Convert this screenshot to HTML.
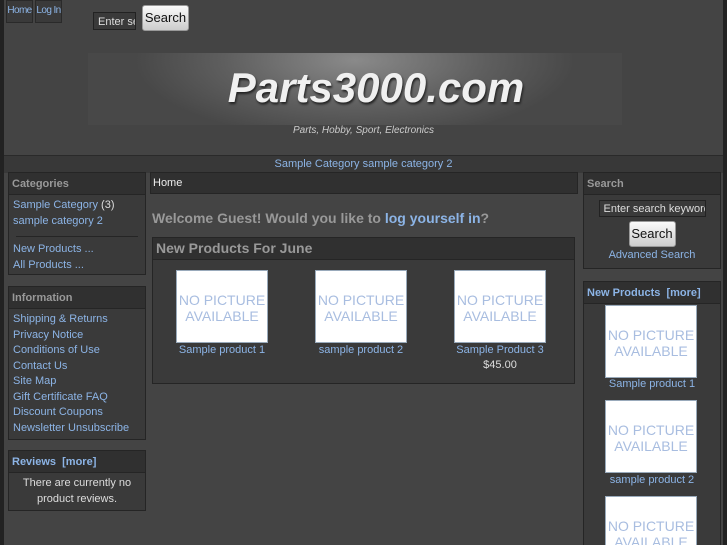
<!DOCTYPE html>
<html style="width:727px;height:545px;overflow:hidden"><head><style>
*{margin:0;padding:0;box-sizing:border-box}
body{width:727px;height:545px;overflow:hidden;background:#444;font-family:"Liberation Sans",sans-serif;font-size:11px;color:#ddd;position:relative}
.a{position:absolute}
a,.l{color:#8cb4e6;text-decoration:none}
.box{position:absolute;background:#3a3a3a;border:1px solid #252525}
.hd{height:22px;background:#303030;border-bottom:1px solid #252525;color:#999;font-weight:bold;padding:5px 3px;font-size:11px}
.np{position:absolute;width:92px;height:73px;background:#fff;border:1px solid #9ab;color:#a8bde0;font-size:14px;text-align:center;line-height:16px;padding-top:21px}
.nb{position:absolute;background:#3a3a3a;border:1px solid #2a2a2a;color:#8cb4e6;padding:4px 0 0;height:23px;white-space:nowrap;font-size:10px;letter-spacing:-0.6px;text-align:center;overflow:hidden}
.lk{line-height:15.5px;padding:3px 4px}
</style></head><body>
<div class="a" style="left:0;top:0;width:4px;height:545px;background:#222"></div>
<div class="a" style="left:723px;top:0;width:4px;height:545px;background:#222"></div>
<div class="nb" style="left:6px;top:0;width:27px">Home</div>
<div class="nb" style="left:35px;top:0;width:27px">Log In</div>
<div class="a" style="left:93px;top:12px;width:43px;height:18px;background:#3a3a3a;border:1px solid #222;color:#ddd;padding:3px 4px;overflow:hidden;white-space:nowrap">Enter search</div>
<div class="a" style="left:142px;top:5px;width:47px;height:26px;background:linear-gradient(#fafafa,#ccc);border:1px solid #999;border-radius:3px;color:#111;font-size:13px;text-align:center;line-height:24px">Search</div>
<div class="a" style="left:88px;top:53px;width:534px;height:72px;background:radial-gradient(ellipse 220px 80px at 50% 10%,#8a8a8a,#5e5e5e 60%,#484848 100%)"></div>
<div class="a" style="left:88px;top:64px;width:576px;text-align:center;font-size:42px;font-weight:bold;font-style:italic;color:#f0f0f0;text-shadow:1px 2px 2px #222;letter-spacing:0px">Parts3000.com</div>
<div class="a" style="left:0;top:125px;width:727px;text-align:center;font-size:10px;font-style:italic;color:#ccc">Parts, Hobby, Sport, Electronics</div>
<div class="a" style="left:4px;top:155px;width:719px;height:18px;background:#383838;border-top:1px solid #2a2a2a;text-align:center;color:#8cb4e6;line-height:16px">Sample Category sample category 2</div>

<div class="box" style="left:8px;top:172px;width:138px;height:103px"><div class="hd">Categories</div>
<div class="lk"><a>Sample Category</a> (3)<br><a>sample category 2</a></div>
<div style="margin:4px 7px;border-top:1px solid #252525"></div>
<div class="lk" style="padding-top:1px"><a>New Products ...</a><br><a>All Products ...</a></div></div>

<div class="box" style="left:8px;top:286px;width:138px;height:154px"><div class="hd">Information</div>
<div class="lk" style="padding-top:3px"><a>Shipping &amp; Returns</a><br><a>Privacy Notice</a><br><a>Conditions of Use</a><br><a>Contact Us</a><br><a>Site Map</a><br><a>Gift Certificate FAQ</a><br><a>Discount Coupons</a><br><a>Newsletter Unsubscribe</a></div></div>

<div class="box" style="left:8px;top:450px;width:138px;height:61px"><div class="hd" style="color:#8cb4e6">Reviews &nbsp;[more]</div>
<div style="text-align:center;line-height:15.5px;padding:3px 10px">There are currently no product reviews.</div></div>

<div class="box" style="left:150px;top:172px;width:428px;height:22px;background:#303030;color:#eee;padding:4px 2px">Home</div>
<div class="a" style="left:152px;top:210px;font-size:14px;font-weight:bold;color:#999">Welcome Guest! Would you like to <a>log yourself in</a>?</div>
<div class="box" style="left:152px;top:237px;width:423px;height:147px"><div class="hd" style="font-size:14px;padding:2px 3px">New Products For June</div></div>
<div class="np" style="left:176px;top:270px">NO PICTURE AVAILABLE</div>
<div class="np" style="left:315px;top:270px">NO PICTURE AVAILABLE</div>
<div class="np" style="left:454px;top:270px">NO PICTURE AVAILABLE</div>
<div class="a l" style="left:150px;top:344px;width:144px;text-align:center">Sample product 1</div>
<div class="a l" style="left:289px;top:344px;width:144px;text-align:center">sample product 2</div>
<div class="a l" style="left:428px;top:344px;width:144px;text-align:center">Sample Product 3</div>
<div class="a" style="left:428px;top:359px;width:144px;text-align:center">$45.00</div>

<div class="box" style="left:583px;top:172px;width:138px;height:97px"><div class="hd">Search</div>
<div style="margin:5px auto 0;width:107px;height:17px;background:#3a3a3a;border:1px solid #222;padding:2px 4px;white-space:nowrap;overflow:hidden">Enter search keywords</div>
<div style="margin:4px auto 0;width:47px;height:26px;background:linear-gradient(#fafafa,#ccc);border:1px solid #999;border-radius:3px;color:#111;font-size:13px;text-align:center;line-height:24px">Search</div>
<div style="text-align:center;margin-top:2px"><a>Advanced Search</a></div></div>

<div class="box" style="left:583px;top:281px;width:138px;height:264px;border-bottom:none"><div class="hd" style="color:#8cb4e6">New Products &nbsp;[more]</div></div>
<div class="np" style="left:605px;top:305px">NO PICTURE AVAILABLE</div>
<div class="a l" style="left:583px;top:378px;width:138px;text-align:center">Sample product 1</div>
<div class="np" style="left:605px;top:400px">NO PICTURE AVAILABLE</div>
<div class="a l" style="left:583px;top:474px;width:138px;text-align:center">sample product 2</div>
<div class="np" style="left:605px;top:496px;height:49px;border-bottom:none">NO PICTURE AVAILABLE</div>
</body></html>
